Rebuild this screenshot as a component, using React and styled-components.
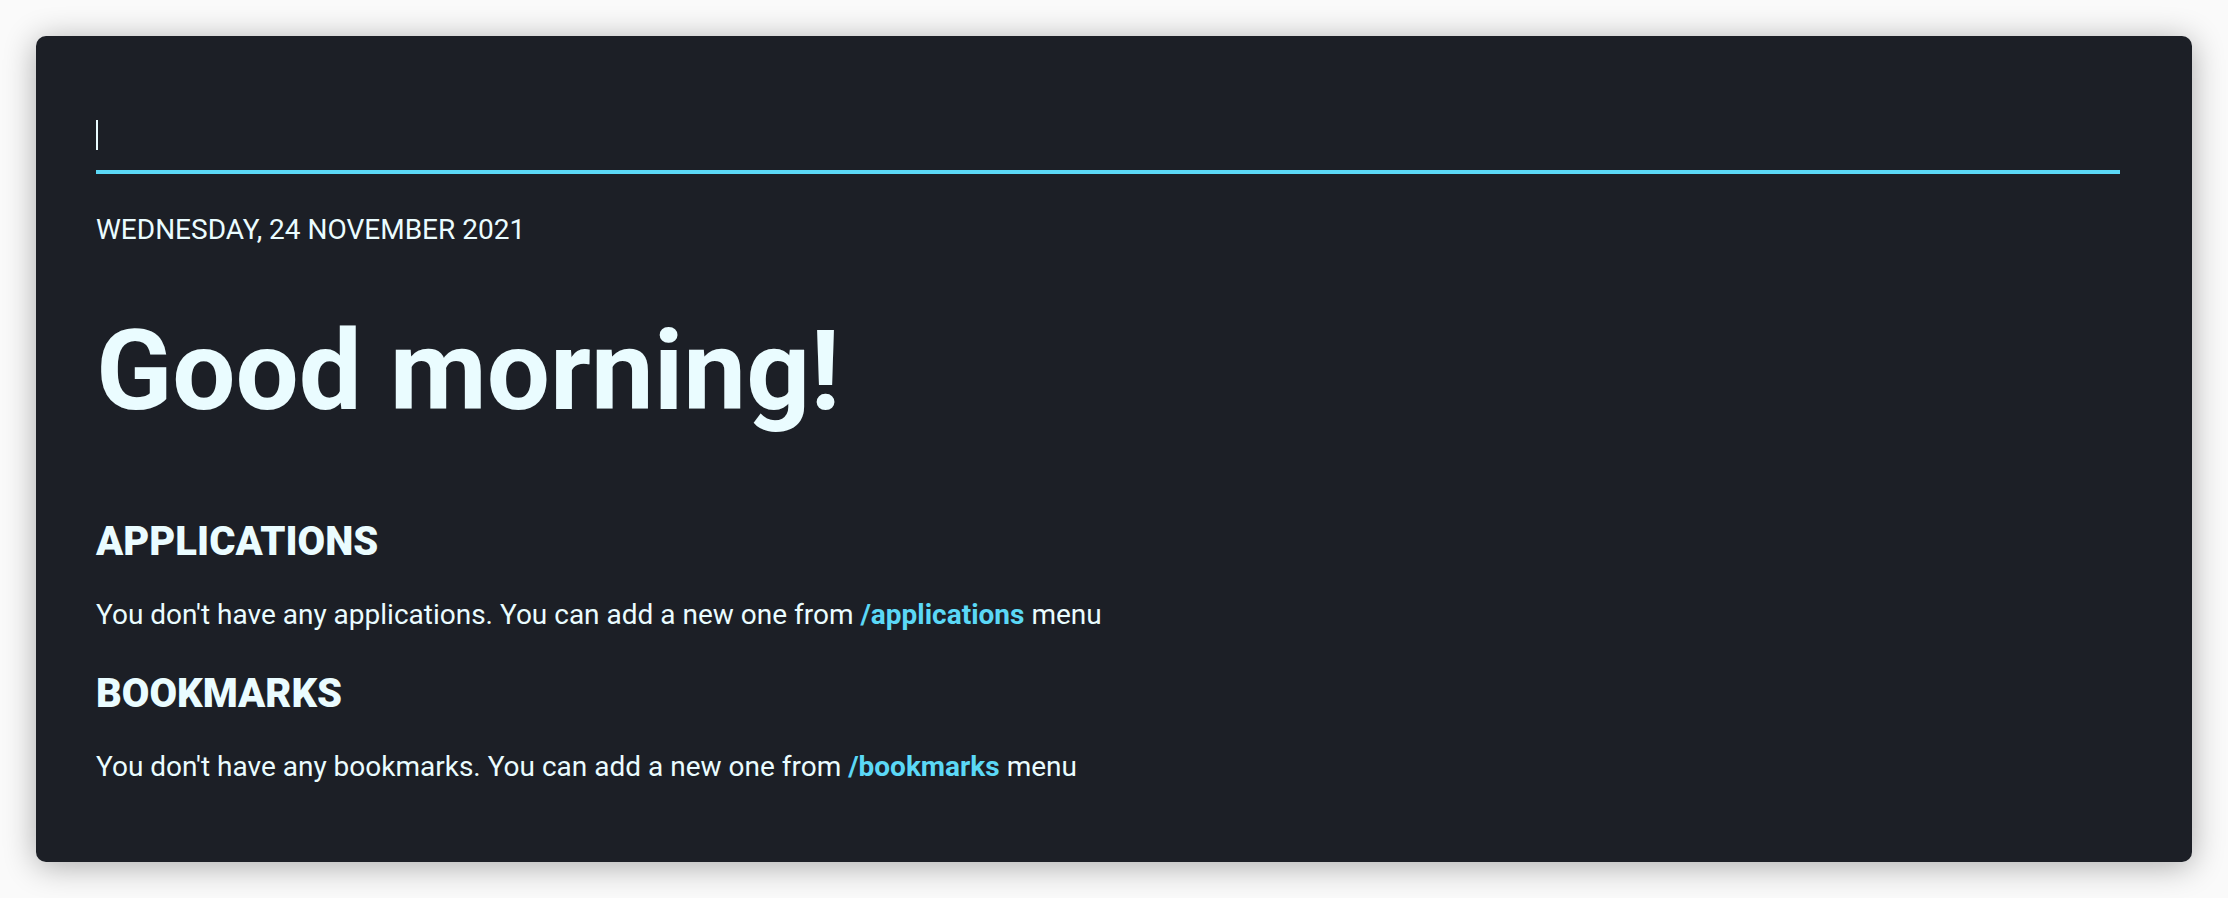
import styled, { createGlobalStyle } from 'styled-components'

const GlobalStyle = createGlobalStyle`
    html, body {
        margin: 0;
        padding: 0;
        background: #fafafa;
    }

    body {
        font-family: Roboto, "Liberation Sans", sans-serif;
        color: #eafcff;
    }
`

const Page = styled.div`
    padding: 36px;
    box-sizing: border-box;
    width: 2228px;
    height: 898px;
`

const Card = styled.main`
    height: 826px;
    box-sizing: border-box;
    background: #1c1f26;
    border-radius: 10px;
    box-shadow: 0 4px 32px rgba(0, 0, 0, .32);
    padding: 64px 72px 0 60px;
`

const SearchBar = styled.div`
    height: 74px;
    box-sizing: border-box;
    border-bottom: 4px solid #5bd8f6;
    display: flex;
    align-items: flex-end;
    padding-bottom: 20px;
`

const Caret = styled.span`
    display: block;
    width: 2px;
    height: 30px;
    background: #eafcff;
`

const DateLine = styled.p`
    margin: 42px 0 0;
    font-size: 28px;
    line-height: 1;
    text-transform: uppercase;
`

const Greeting = styled.h1`
    margin: 71px 0 0;
    font-size: 112px;
    line-height: 1;
    font-weight: 700;
`

const Section = styled.section`
    margin-top: ${p => p.$gap}px;
`

const Title = styled.h2`
    margin: 0;
    font-size: 40px;
    line-height: 1;
    font-weight: 900;
    text-transform: uppercase;
`

const Note = styled.p`
    margin: 39px 0 0;
    font-size: 28px;
    line-height: 1;

    a {
        color: #5bd8f6;
        font-weight: 700;
        text-decoration: none;
    }
`

function App() {
    return (
        <>
            <GlobalStyle />
            <Page>
                <Card>
                    <SearchBar>
                        <Caret />
                    </SearchBar>
                    <DateLine>Wednesday, 24 November 2021</DateLine>
                    <Greeting>Good morning!</Greeting>
                    <Section $gap={95}>
                        <Title>Applications</Title>
                        <Note>
                            You don't have any applications. You can add a new one from <a href="#">/applications</a> menu
                        </Note>
                    </Section>
                    <Section $gap={45}>
                        <Title>Bookmarks</Title>
                        <Note>
                            You don't have any bookmarks. You can add a new one from <a href="#">/bookmarks</a> menu
                        </Note>
                    </Section>
                </Card>
            </Page>
        </>
    )
}

export default App
